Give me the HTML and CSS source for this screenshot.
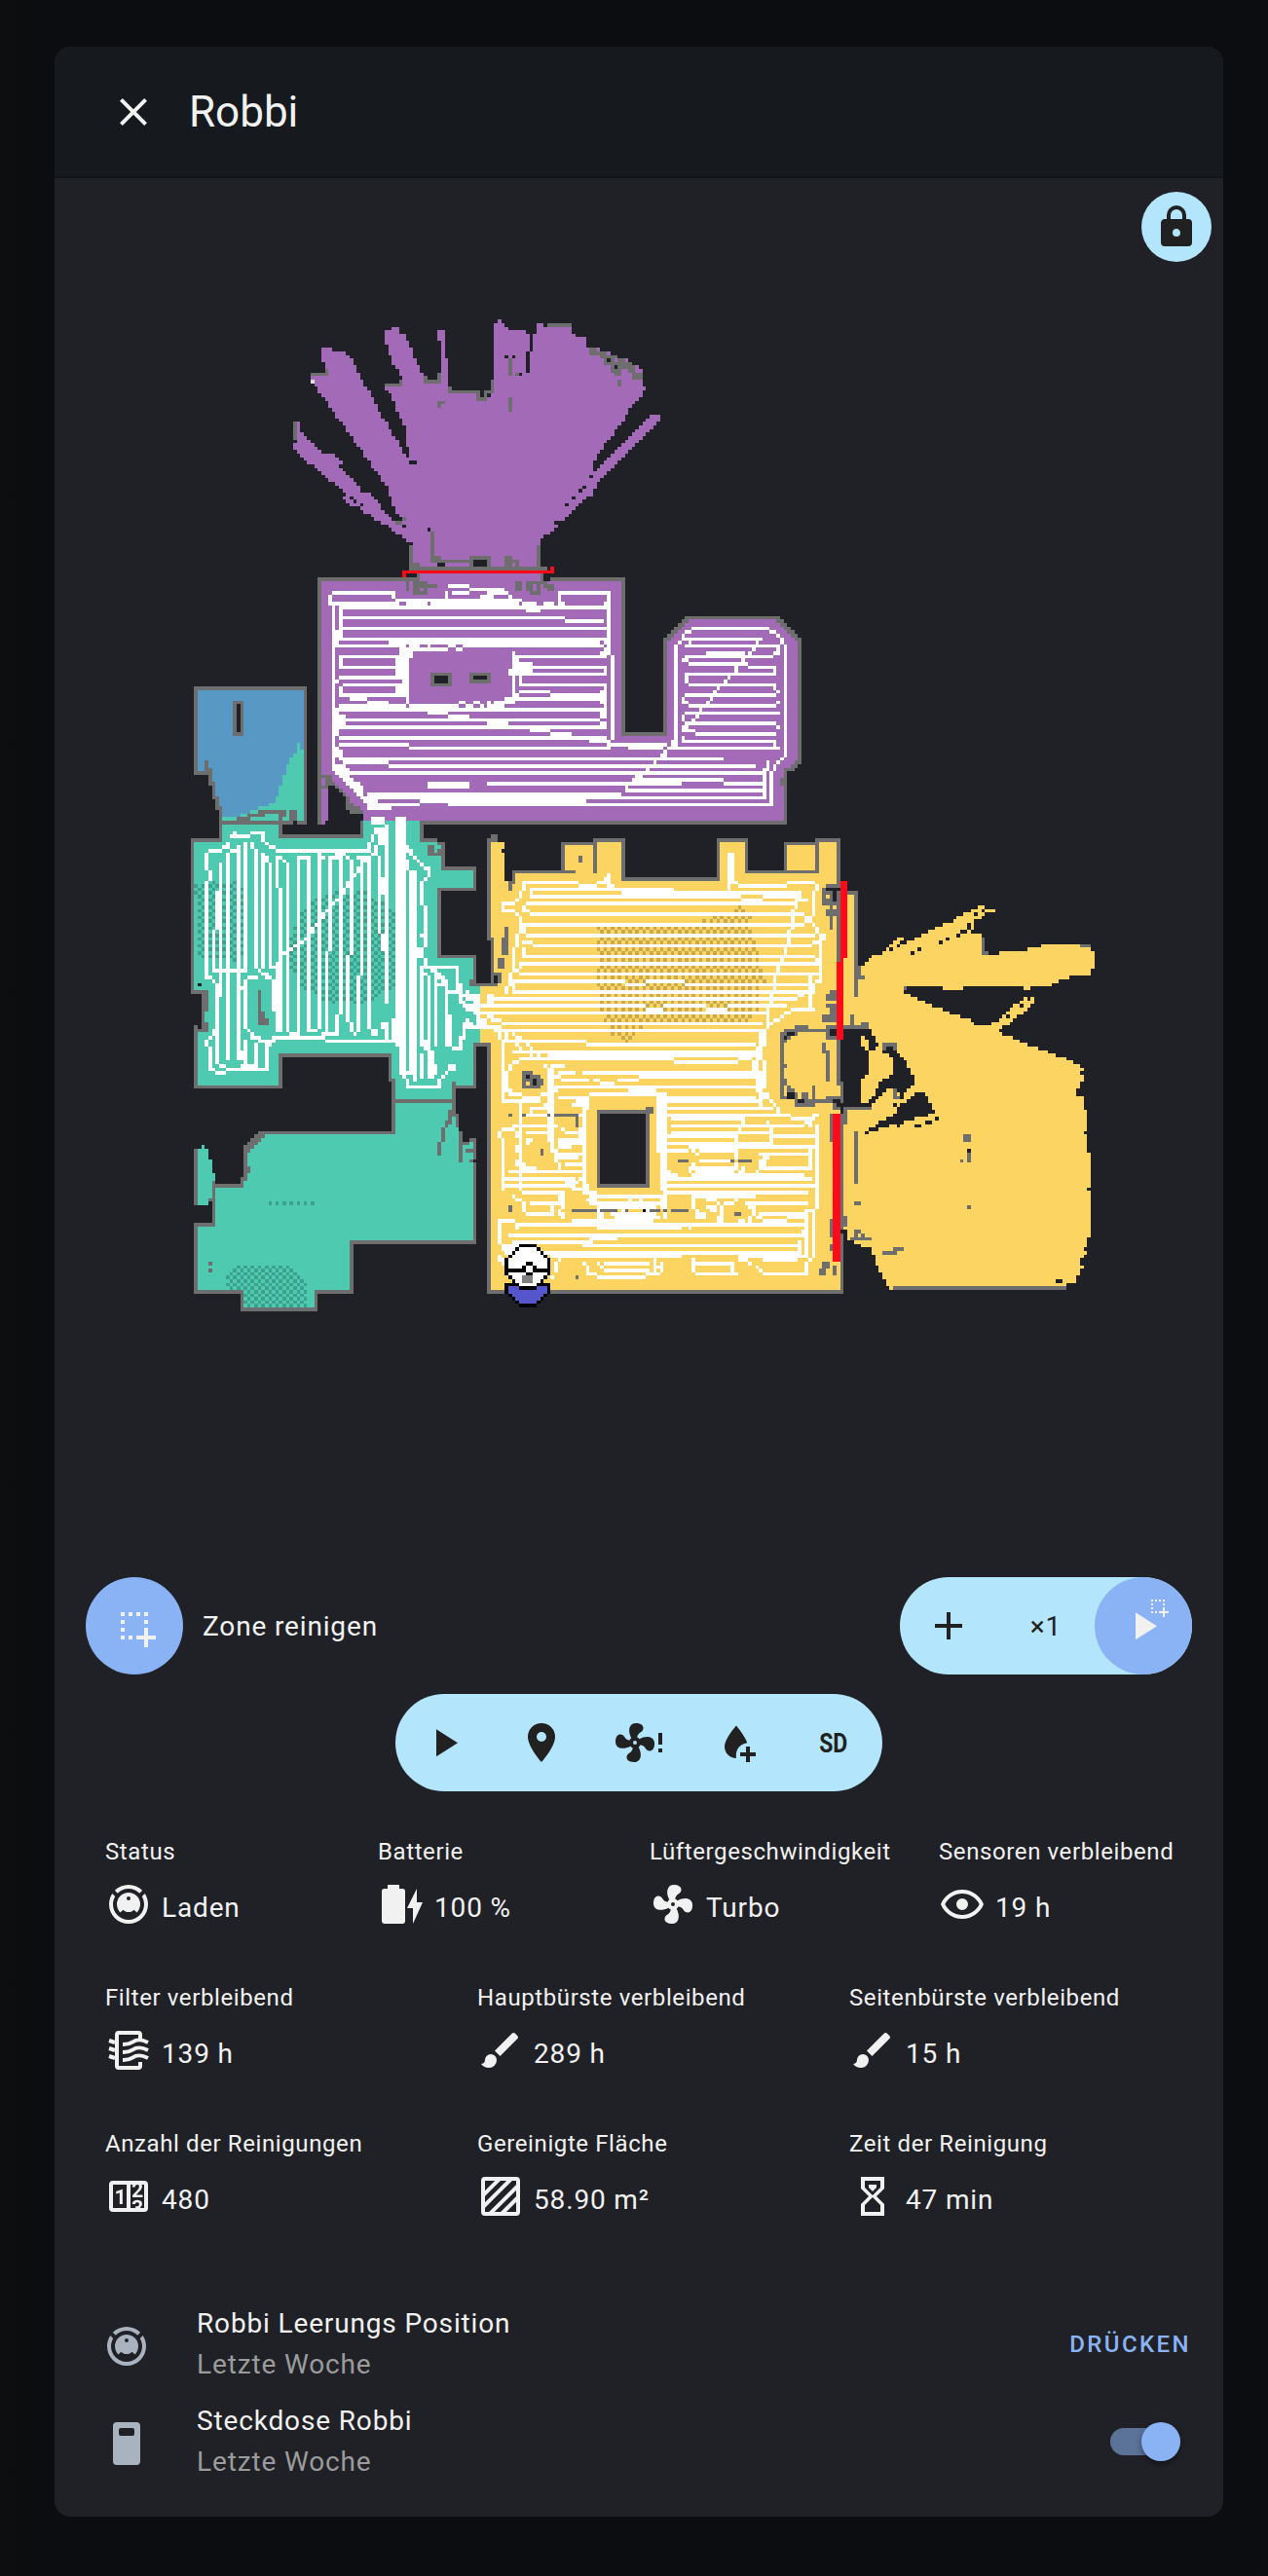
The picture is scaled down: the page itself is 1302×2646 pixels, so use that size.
FILE: index.html
```html
<!DOCTYPE html>
<html lang="de">
<head>
<meta charset="utf-8">
<title>Robbi</title>
<link rel="stylesheet" href="styles.css">
</head>
<body>
<svg class="defs" aria-hidden="true">
  <symbol id="close" viewBox="0 0 24 24"><path d="M19,6.41L17.59,5L12,10.59L6.41,5L5,6.41L10.59,12L5,17.59L6.41,19L12,13.41L17.59,19L19,17.59L13.41,12L19,6.41Z"/></symbol>
  <symbol id="lock" viewBox="0 0 24 24"><path d="M12,17A2,2 0 0,0 14,15C14,13.89 13.1,13 12,13A2,2 0 0,0 10,15A2,2 0 0,0 12,17M18,8A2,2 0 0,1 20,10V20A2,2 0 0,1 18,22H6A2,2 0 0,1 4,20V10C4,8.89 4.9,8 6,8H7V6A5,5 0 0,1 12,1A5,5 0 0,1 17,6V8H18M12,3A3,3 0 0,0 9,6V8H15V6A3,3 0 0,0 12,3Z"/></symbol>
  <symbol id="select" viewBox="0 0 24 24"><path d="M13,17H17V13H19V17H23V19H19V23H17V19H13V17M11,17V19H9V17H11M7,17V19H5V17H7M19,9V11H17V9H19M19,5V7H17V5H19M15,5V7H13V5H15M11,5V7H9V5H11M7,5V7H5V5H7M7,13V15H5V13H7M7,9V11H5V9H7Z"/></symbol>
  <symbol id="plus" viewBox="0 0 24 24"><path d="M19,13H13V19H11V13H5V11H11V5H13V11H19V13Z"/></symbol>
  <symbol id="play" viewBox="0 0 24 24"><path d="M8,5.14V19.14L19,12.14L8,5.14Z"/></symbol>
  <symbol id="marker" viewBox="0 0 24 24"><path d="M12,11.5A2.5,2.5 0 0,1 9.5,9A2.5,2.5 0 0,1 12,6.5A2.5,2.5 0 0,1 14.5,9A2.5,2.5 0 0,1 12,11.5M12,2A7,7 0 0,0 5,9C5,14.25 12,22 12,22C12,22 19,14.25 19,9A7,7 0 0,0 12,2Z"/></symbol>
  <symbol id="fan" viewBox="0 0 24 24"><path d="M12,11A1,1 0 0,0 11,12A1,1 0 0,0 12,13A1,1 0 0,0 13,12A1,1 0 0,0 12,11M12.5,2C17,2 17.11,5.57 14.75,6.75C13.76,7.24 13.32,8.29 13.13,9.22C13.61,9.42 14.03,9.73 14.35,10.13C18.05,8.13 22.03,8.92 22.03,12.5C22.03,17 18.46,17.1 17.28,14.73C16.78,13.74 15.72,13.3 14.79,13.11C14.59,13.59 14.28,14 13.88,14.34C15.87,18.03 15.08,22 11.5,22C7,22 6.91,18.42 9.27,17.24C10.25,16.75 10.69,15.71 10.89,14.79C10.4,14.59 9.97,14.27 9.65,13.87C5.96,15.85 2,15.07 2,11.5C2,7 5.56,6.89 6.74,9.26C7.24,10.25 8.29,10.68 9.22,10.87C9.41,10.39 9.73,9.97 10.14,9.65C8.15,5.96 8.94,2 12.5,2Z"/></symbol>
  <symbol id="fan-alert" viewBox="0 0 24 24"><use href="#fan" x="-2" y="0" width="24" height="24"/><path d="M22,7H24V13H22ZM22,15H24V17H22Z"/></symbol>
  <symbol id="water-plus" viewBox="0 0 24 24"><path d="M12,3.25C12,3.25 6,10 6,14C6,17.32 8.69,20 12,20C11.5,16.5 13,13 17.6,12.1C16.3,8.2 12,3.25 12,3.25ZM17,14H19V17H22V19H19V22H17V19H14V17H17Z"/></symbol>
  <symbol id="vacuum" viewBox="0 0 24 24"><path d="M12,2C14.65,2 17.19,3.06 19.07,4.93L17.65,6.35C16.15,4.85 14.12,4 12,4C9.88,4 7.84,4.84 6.35,6.35L4.93,4.93C6.81,3.06 9.35,2 12,2M3.66,6.5L5.11,7.94C4.39,9.17 4,10.57 4,12A8,8 0 0,0 12,20A8,8 0 0,0 20,12C20,10.57 19.61,9.17 18.88,7.94L20.34,6.5C21.42,8.12 22,10.04 22,12A10,10 0 0,1 12,22A10,10 0 0,1 2,12C2,10.04 2.58,8.12 3.66,6.5M12,6A6,6 0 0,1 18,12C18,13.59 17.37,15.12 16.24,16.24L14.83,14.83C14.08,15.58 13.06,16 12,16C10.94,16 9.92,15.58 9.17,14.83L7.76,16.24C6.63,15.12 6,13.59 6,12A6,6 0 0,1 12,6M12,8A1,1 0 0,0 11,9A1,1 0 0,0 12,10A1,1 0 0,0 13,9A1,1 0 0,0 12,8Z"/></symbol>
  <symbol id="battery" viewBox="0 0 24 24"><path d="M23,11H20V4L15,14H18V22M12.67,4H11V2H5V4H3.33A1.33,1.33 0 0,0 2,5.33V20.67C2,21.4 2.6,22 3.33,22H12.67A1.33,1.33 0 0,0 14,20.67V5.33A1.33,1.33 0 0,0 12.67,4Z"/></symbol>
  <symbol id="eye" viewBox="0 0 24 24"><path d="M12,9A3,3 0 0,1 15,12A3,3 0 0,1 12,15A3,3 0 0,1 9,12A3,3 0 0,1 12,9M12,4.5C17,4.5 21.27,7.61 23,12C21.27,16.39 17,19.5 12,19.5C7,19.5 2.73,16.39 1,12C2.73,7.61 7,4.5 12,4.5M3.18,12C4.83,15.36 8.24,17.5 12,17.5C15.76,17.5 19.17,15.36 20.82,12C19.17,8.64 15.76,6.5 12,6.5C8.24,6.5 4.83,8.64 3.18,12Z"/></symbol>
  <symbol id="filter" viewBox="0 0 24 24"><g fill="none" stroke="currentColor" stroke-width="2"><path d="M18,6V4A1,1 0 0,0 17,3H7A1,1 0 0,0 6,4V20A1,1 0 0,0 7,21H17A1,1 0 0,0 18,20V18"/><path d="M22,8C18,6 16,6.500 14,7.800S11,9 9,9M22,12C18,10 16,10.500 14,11.800S11,13 9,13M22,16C18,14 16,14.500 14,15.800S11,17 9,17M2,7L5,8M2,11L5,12M2,15L5,16"/></g></symbol>
  <symbol id="brush" viewBox="0 0 24 24"><path d="M20.71,4.63L19.37,3.29C19,2.9 18.35,2.9 17.96,3.29L9,12.25L11.75,15L20.71,6.04C21.1,5.65 21.1,5 20.71,4.63M7,14A3,3 0 0,0 4,17C4,18.31 2.84,19 2,19C2.92,20.22 4.5,21 6,21A4,4 0 0,0 10,17A3,3 0 0,0 7,14Z"/></symbol>
  <symbol id="counter" viewBox="0 0 24 24"><path d="M4,4H20A2,2 0 0,1 22,6V18A2,2 0 0,1 20,20H4A2,2 0 0,1 2,18V6A2,2 0 0,1 4,4M4,6V18H11V6H4M20,18V6H18.76C19,6.54 18.95,7.07 18.95,7.13C18.88,7.8 18.41,8.5 18.24,8.75L15.91,11.3L19.23,11.28L19.24,12.5L14.04,12.47L14,11.47C14,11.47 17.05,8.24 17.2,7.95C17.34,7.67 17.91,6 16.5,6C15.27,6.05 15.41,7.3 15.41,7.3L13.87,7.31C13.87,7.31 13.88,6.65 14.25,6H13V18H15.58L15.57,17.14L16.54,17.13C16.54,17.13 17.45,16.97 17.46,16.08C17.5,15.08 16.65,15.08 16.5,15.08C16.37,15.08 15.43,15.13 15.43,15.95H13.91C13.91,15.95 13.95,13.89 16.5,13.89C19.1,13.89 18.96,15.91 18.96,15.91C18.96,15.91 19,17.16 17.85,17.63L18.37,18H20M8.92,16H7.42V10.2L5.62,10.76V9.53L8.76,8.41H8.92V16Z"/></symbol>
  <symbol id="area" viewBox="0 0 24 24"><g fill="none" stroke="currentColor" stroke-width="2"><rect x="3" y="3" width="18" height="18" rx="1"/><path d="M3,11.500L11.500,3M3,17.500L17.500,3M6.500,21L21,6.500M12.500,21L21,12.500"/></g></symbol>
  <symbol id="sand" viewBox="0 0 24 24"><path d="M6,2V8L10,12L6,16V22H18V16L14,12L18,8V2H6M16,16.5V20H8V16.5L12,12.5L16,16.5M12,11.5L8,7.5V4H16V7.5L12,11.5M10,6H14V7.500L12,9.500L10,7.500Z"/></symbol>
  <symbol id="socket" viewBox="0 0 24 24"><path fill-rule="evenodd" d="M7,1H17A2,2 0 0,1 19,3V21A2,2 0 0,1 17,23H7A2,2 0 0,1 5,21V3A2,2 0 0,1 7,1ZM9,4A1,1 0 0,0 8,5V7A1,1 0 0,0 9,8H15A1,1 0 0,0 16,7V5A1,1 0 0,0 15,4Z"/></symbol>
</svg>
<main class="dialog">
  <header class="header">
    <svg class="icon"><use href="#close"/></svg>
    <h1 class="title">Robbi</h1>
  </header>
  <section class="map">
    <canvas id="map" class="map-canvas" width="1200" height="1400"></canvas>
    <div class="lock"><svg class="icon"><use href="#lock"/></svg></div>
  </section>
  <section class="zone">
    <div class="round"><svg class="icon"><use href="#select"/></svg></div>
    <span class="zone-label">Zone reinigen</span>
    <div class="repeat">
      <div class="cell"><svg class="icon"><use href="#plus"/></svg></div>
      <div class="cell">×1</div>
      <div class="round go"><svg class="icon"><use href="#play"/></svg><svg class="mini"><use href="#select"/></svg></div>
    </div>
  </section>
  <nav class="toolbar">
    <div class="cell"><svg class="icon"><use href="#play"/></svg></div>
    <div class="cell"><svg class="icon"><use href="#marker"/></svg></div>
    <div class="cell"><svg class="icon"><use href="#fan-alert"/></svg></div>
    <div class="cell"><svg class="icon"><use href="#water-plus"/></svg></div>
    <div class="cell"><span class="sd">SD</span></div>
  </nav>
  <section class="stats">
    <div class="row four">
      <div><div class="label">Status</div><div class="value"><svg class="icon"><use href="#vacuum"/></svg>Laden</div></div>
      <div><div class="label">Batterie</div><div class="value"><svg class="icon"><use href="#battery"/></svg>100 %</div></div>
      <div><div class="label">Lüftergeschwindigkeit</div><div class="value"><svg class="icon"><use href="#fan"/></svg>Turbo</div></div>
      <div><div class="label">Sensoren verbleibend</div><div class="value"><svg class="icon"><use href="#eye"/></svg>19 h</div></div>
    </div>
    <div class="row">
      <div><div class="label">Filter verbleibend</div><div class="value"><svg class="icon"><use href="#filter"/></svg>139 h</div></div>
      <div><div class="label">Hauptbürste verbleibend</div><div class="value"><svg class="icon"><use href="#brush"/></svg>289 h</div></div>
      <div><div class="label">Seitenbürste verbleibend</div><div class="value"><svg class="icon"><use href="#brush"/></svg>15 h</div></div>
    </div>
    <div class="row">
      <div><div class="label">Anzahl der Reinigungen</div><div class="value"><svg class="icon"><use href="#counter"/></svg>480</div></div>
      <div><div class="label">Gereinigte Fläche</div><div class="value"><svg class="icon"><use href="#area"/></svg>58.90 m²</div></div>
      <div><div class="label">Zeit der Reinigung</div><div class="value"><svg class="icon"><use href="#sand"/></svg>47 min</div></div>
    </div>
  </section>
  <section class="entities">
    <div class="entity">
      <svg class="icon"><use href="#vacuum"/></svg>
      <div class="names"><div>Robbi Leerungs Position</div><div class="sub">Letzte Woche</div></div>
      <span class="press">DRÜCKEN</span>
    </div>
    <div class="entity">
      <svg class="icon"><use href="#socket"/></svg>
      <div class="names"><div>Steckdose Robbi</div><div class="sub">Letzte Woche</div></div>
      <div class="switch"><div class="thumb"></div></div>
    </div>
  </section>
</main>
<script src="map.js"></script>
</body>
</html>
```
FILE: styles.css
```css
* { box-sizing: border-box; }
body {
  margin: 0;
  min-height: 2646px;
  padding: 48px 46px 61px 56px;
  background: linear-gradient(90deg, #0d0e0f 0, #0b0d11 60px, #0b0d11 1250px, #0c0e12 100%);
  font-family: Roboto, sans-serif;
  font-size: 28px;
  letter-spacing: 0.85px;
  color: #f1f1f1;
}
.defs { position: absolute; width: 0; height: 0; }
.icon { display: block; width: 48px; height: 48px; flex: none; fill: currentColor; }
.dialog {
  width: 1200px;
  height: 2537px;
  border-radius: 16px;
  overflow: hidden;
  background: #202126;
  display: flex;
  flex-direction: column;
}
.header {
  height: 135px;
  flex: none;
  padding: 2px 57px 0 57px;
  display: flex;
  align-items: center;
  gap: 33px;
  background: #161a1e;
  border-bottom: 3px solid #121519;
}
.title { margin: 0; font-size: 44px; font-weight: 400; letter-spacing: 0; line-height: 130px; }
.map { position: relative; height: 1437px; flex: none; }
.map-canvas { display: block; }
.lock {
  position: absolute;
  right: 12px;
  top: 14px;
  width: 72px;
  height: 72px;
  padding: 12px;
  border-radius: 50%;
  background: #b3e5fc;
  color: #212121;
}
.zone { display: flex; align-items: center; height: 100px; padding: 0 32px; }
.round {
  position: relative;
  width: 100px;
  height: 100px;
  border-radius: 50%;
  background: #8ab3f5;
  color: #f1f1f1;
  display: flex;
  align-items: center;
  justify-content: center;
}
.mini { position: absolute; left: 53px; top: 18px; width: 24px; height: 24px; fill: currentColor; }
.zone-label { margin-left: 20px; flex: 1; }
.repeat, .toolbar { display: flex; border-radius: 50px; background: #b3e5fc; color: #212121; }
.repeat { width: 300px; }
.cell { width: 100px; height: 100px; display: flex; align-items: center; justify-content: center; }
.toolbar { width: 500px; height: 100px; margin: 20px 0 0 350px; }
.sd { font-weight: 700; letter-spacing: 0; transform: scaleX(0.82); }
.stats { padding: 41px 52px 0; }
.row { display: grid; grid-template-columns: 382px 382px 1fr; height: 150px; }
.four { grid-template-columns: 280px 279px 297px 1fr; }
.label { height: 42px; line-height: 42px; font-size: 24px; white-space: nowrap; letter-spacing: 0.6px; }
.value { display: flex; align-items: center; gap: 10px; height: 48px; margin-top: 13px; line-height: 48px; }
.value .icon { margin-top: -8px; }
.entities { padding: 27px 36px 0 50px; }
.entity { display: flex; align-items: center; height: 100px; }
.entity > .icon { color: #a9b3bf; margin-top: 4px; }
.names { margin-left: 48px; flex: 1; line-height: 42px; }
.sub { color: #9b9b9b; }
.press { font-size: 24px; font-weight: 500; letter-spacing: 2.4px; color: #8ab3f5; margin-right: -3px; }
.switch { width: 72px; height: 28px; margin-right: 8px; border-radius: 14px; background: #5b7299; display: flex; align-items: center; justify-content: flex-end; }
.thumb { width: 40px; height: 40px; flex: none; border-radius: 50%; background: #8ab3f5; box-shadow: 0 3px 6px rgba(0, 0, 0, .4); }
```
FILE: map.js
```javascript
// Floor map drawn on a cell grid. Commands:
// F x y      origin of the following shapes (units are thirds of a pixel)
// P c pts    filled polygon       R c boxes  x1,y1,x2,y2 groups
// L c pts    one-cell polyline    K c pts    checkerboard polygon
const CELL = 3.624, OX = 195.8, OY = 328.35, COLS = 258, ROWS = 282;
const COLORS = {
  p: '#a36ab8', t: '#4ecab1', y: '#fcd462', b: '#5799c4', g: '#6e6e6e', w: '#ffffff',
  r: '#ff0a18', d: '#202126', T: '#3ea18e', Y: '#caaa4e', k: '#000000', n: '#5555cc', h: '#808080', e: '#e0e0e0'
};
const DATA = `
F 280 310
P p 63,435 63,457 225,590 270,640 366,700 420,745 432,745 440,700 400,690 366,672 330,625 303,590 280,588 205,510 214,500 214,490 193,470 160,468 84,393 84,372 72,372 72,430
L p 220,604 232,604 240,628 262,628
P p 150,141 183,141 183,152 225,152 245,180 335,350 415,480 440,510 440,750 400,670 375,640 355,575 117,240 117,220 160,220 160,190 150,185
P p 345,78 357,87 366,78 390,78 390,99 410,99 440,180 465,228 470,250 520,250 520,120 507,118 507,87 531,87 531,175 540,175 540,275 630,285 660,295 680,284 680,66 693,66 693,54 704,54 704,66 714,70 738,87 780,87 780,99 792,99 792,152 801,152 801,99 813,99 813,66 834,66 834,78 920,78 920,99 945,108 966,110 966,141 1000,141 1139,207 1139,262 1149,262 1149,273 1139,273 1139,295 1106,318 1086,360 1000,470 987,500 987,530 1080,440 1170,348 1194,348 1194,360 1000,556 985,590 900,670 867,675 878,690 825,735 825,816 432,816 432,500 420,480 410,390 385,340 365,285 345,270 345,258 398,258 390,207 366,195 357,130 345,130
R p 792,152,801,228
R g 117,219,171,228 160,207,171,228 345,252,398,262 390,240,398,262 465,228,477,250 465,240,518,250 507,219,518,250 540,262,551,284 540,273,640,284 627,284,660,305 651,273,680,284 672,240,680,284 63,372,72,426 507,306,531,315 507,306,518,327 726,174,738,228 726,294,738,338 747,219,758,228 846,66,920,78
R g 975,141,998,165 998,152,1030,165 1010,165,1041,174 1020,165,1062,198 1041,186,1075,219 1050,198,1074,228 1062,174,1085,207 1085,186,1106,207 1095,198,1116,219 1106,219,1139,240 1062,240,1074,262
R g 378,675,398,686 400,663,410,675 420,750,432,828 813,750,825,816 486,708,498,806 486,795,518,806 498,784,518,806 518,795,606,806 606,784,672,816 714,784,738,816 738,795,758,816 420,816,846,828 432,806,453,828
R d 780,152,792,219 640,273,651,294 714,165,726,174 738,165,747,174 758,219,768,228 1030,174,1041,186 1053,198,1062,207 618,795,660,816 507,806,531,816 477,697,486,708 420,490,443,500 975,535,987,545 955,567,966,577 942,577,953,588 921,600,932,610 900,622,911,632 270,622,280,632 247,610,258,620 236,600,247,610
R p 738,806,747,816 1030,152,1041,165 1053,174,1062,186 1085,174,1095,186 1116,207,1128,219 1128,207,1139,219
R e 117,240,129,252
F 180 570
P g 438,69 1386,69 1386,549 1503,549 1503,255 1569,189 1863,189 1929,255 1929,636 1905,665 1884,665 1884,831 579,831 579,797 546,797 525,775 525,745 471,700 471,780 450,831 438,831
P p 450,81 1374,81 1374,558 1515,558 1515,265 1580,201 1851,201 1917,265 1917,625 1890,657 1875,657 1875,819 579,819 579,785 546,775 537,745 483,697 450,675
R p 450,722,471,819 450,819,459,831 450,690,459,711 753,57,1125,81
R g 450,678,480,690 459,690,483,700 450,711,471,722 711,81,720,112 732,81,777,122 765,90,807,102 743,57,753,81 1863,690,1875,711
R p 753,102,765,112
R d 711,57,743,69
R w 483,114,678,122 471,122,483,156 666,122,678,135 678,135,1100,144 831,114,840,135 840,90,906,102 906,102,1014,112 990,112,1014,122 940,122,980,135 852,112,906,122
P w 483,144 1341,144 1341,309 1353,309 1353,579 1536,579 1536,570 1545,570 1557,600 1830,660 1842,665 1842,777 690,777 600,790 565,740 483,657
R p 840,102,906,112 852,122,940,135 690,144,711,156 777,144,786,156 492,156,504,230
R p 516,168,1329,189 516,201,1329,222 516,231,1329,255 504,264,657,276 492,290,690,309 516,318,678,342 504,351,678,375 504,384,699,396 516,405,678,429 504,438,540,450 591,438,711,450 492,450,591,462 657,450,711,462 492,290,504,384 492,396,504,471 492,396,516,405
R w 516,255,657,264 504,309,516,342
R p 504,483,777,492 504,483,525,492 840,483,1308,492 525,492,840,504 906,492,1308,504 525,516,960,525 1026,516,1308,525 504,537,1329,558 504,570,1275,580 720,580,1329,591 504,591,720,603 516,603,1503,624 657,636,1470,645 525,645,657,657 537,657,1449,666 537,678,1416,690 546,690,1047,699 570,699,777,711 906,699,1047,711 580,711,777,722 906,711,1386,722 580,722,1386,732 580,732,1362,744 625,753,753,765 753,765,840,777 1266,753,1830,765 492,558,504,591 492,624,516,645
R w 504,624,1503,636 591,732,1842,736 711,290,720,462
R p 720,290,1040,462 711,462,1040,465
R g 786,363,852,405 906,363,972,396
R d 798,375,840,396 918,375,960,384
R w 720,276,732,318 732,290,753,297 753,288,840,297 864,288,885,297 711,276,1040,288 700,290,711,309 678,351,700,363 690,363,700,375 700,375,711,384 678,405,690,438 720,462,1040,471 873,450,894,462 918,450,940,462 960,450,972,462 982,450,1015,462
R p 753,276,777,288 786,276,840,288 864,276,885,288 873,462,894,471 918,462,940,471 950,462,960,471 711,276,720,288
F 500 570
R g 87,81,108,112 120,81,141,112 132,112,165,122 153,90,165,122 120,81,186,90 174,90,186,102 186,90,207,112 165,57,174,81
R d 174,57,195,69 174,69,195,78
R w 0,102,54,112 0,112,33,122 54,112,66,122 66,122,78,135 78,135,108,156 120,168,165,177 219,114,381,122 219,122,228,144 369,114,381,309
R p 228,122,369,135 240,144,360,156 99,144,108,156 153,144,174,156 174,135,219,144 207,144,219,156 108,135,153,144 195,255,0,255
R w 0,190,240,201 240,201,360,210 0,222,360,231 195,255,348,264 0,255,195,264
R p 240,190,369,201 78,288,360,297 87,297,348,309 99,318,369,330 141,330,369,342 99,342,141,351 141,351,360,363 108,375,369,396 99,405,360,417 195,417,348,429 99,429,195,438 87,450,348,462 54,462,360,471 87,375,99,429 348,264,360,276 360,276,369,288
R w 78,297,87,438 66,351,78,375 99,342,141,342 108,363,369,375 99,375,108,396 99,396,360,405 99,417,195,429 54,438,348,450 54,438,78,462 87,309,369,318 99,330,141,342 141,342,360,351 369,330,381,580 132,537,195,549 195,549,261,558 315,570,369,580
R p 369,309,381,571 66,516,348,525 348,504,369,516 381,591,435,603 381,570,393,580 414,570,567,580 567,570,576,591 543,591,555,603 0,603,543,612 555,603,903,624
R w 567,570,576,591 555,591,903,603
R p 522,636,858,645 501,657,849,666 480,678,849,690 597,699,729,699 729,690,849,699 87,690,450,699 435,711,849,722 414,732,849,744 858,665,870,765
R w 0,699,87,711 87,699,597,711 597,690,729,699 729,699,849,711 849,678,858,699 849,732,858,753 858,636,870,657
R w 576,276,588,570 915,276,924,624 903,624,915,636 891,636,903,645 882,645,891,666 870,665,882,777 588,264,597,276 597,243,609,264 609,231,630,243 630,222,870,231 870,231,891,243 891,243,903,255 903,255,915,276
R w 609,255,849,264 609,276,903,288 621,264,630,276 609,309,882,318 675,297,795,309 597,318,621,330 882,297,903,309 891,288,903,309 621,333,804,342 804,342,891,351 882,351,891,375 609,363,891,375 609,375,621,396 621,396,891,405 882,405,891,417 891,417,903,429 609,429,891,438 597,438,609,462 609,450,621,462 621,462,891,471 891,450,903,462 609,483,903,492 597,492,609,516 609,516,891,525 891,525,903,537 597,525,609,549 600,537,642,549 642,549,891,558 597,558,609,579 597,570,891,579 882,579,891,591 891,591,903,603 609,525,621,537
R p 609,288,621,309 555,580,567,591
L w 832,270 820,292 790,322
R w 762,342,771,363 741,375,750,384 730,384,741,396 708,405,717,417 697,417,708,429 685,438,697,450 675,450,685,462 654,471,663,483 642,492,654,504 630,504,642,516 555,591,567,603 534,612,543,624 510,636,522,645 489,657,501,666 456,678,480,690 446,690,456,699 426,711,435,722 402,732,414,744
F 180 570
P g 57,405 405,405 405,831 135,831 135,785 123,785 123,752 111,750 111,711 102,710 102,678 57,678
P b 69,417 396,417 396,819 145,819 145,777 133,770 133,745 123,740 123,700 111,700 111,657 102,655 102,636 90,636 90,666 69,666
R g 90,636,102,678 177,450,210,558
R d 189,462,198,549
P t 372,579 384,579 384,603 396,603 396,819 145,819 150,810 190,808 220,795 255,778 285,770 310,760 320,723 330,700 345,650 355,620 372,612
R g 189,808,231,819 222,797,280,808 255,786,341,797 318,797,341,808 318,808,330,819 351,786,372,819 135,819,405,831
R d 363,819,372,831
F 180 820
P g 135,69 330,69 330,114 570,114 570,69 765,69 765,123 807,123 807,135 831,135 831,210 927,210 927,288 819,288 819,483 927,483 927,570 960,570 960,768 927,768 927,897 864,897 864,972 666,972 666,872 657,872 657,798 330,798 330,897 57,897 57,700 81,700 81,603 48,603 48,123 135,123
P t 145,81 318,81 318,123 579,123 579,69 753,69 753,135 807,135 807,147 819,147 819,222 918,222 918,276 807,276 807,495 918,495 918,582 960,582 960,756 918,756 918,885 852,885 852,972 678,972 678,862 666,862 666,786 318,786 318,885 69,885 69,723 102,723 102,591 57,591 57,135 145,135
R g 777,147,819,177 906,558,918,582 255,591,264,657 255,657,276,678 255,678,285,697 81,603,102,657 90,657,102,690
R t 798,147,819,156 798,156,807,168 90,657,102,690
R d 69,570,81,582 69,700,81,711 57,603,81,690
K T 80,255 180,255 210,265 210,495 180,504 144,490 69,495 69,310 57,300 57,276
K T 450,297 520,288 590,290 620,310 678,350 678,580 640,600 620,625 545,635 470,635 430,610 385,575 350,510 351,430 385,360 420,325
R w 102,156,144,168 144,147,165,156 156,135,168,147 168,114,231,123 177,102,189,114 231,102,276,114 264,114,276,135 276,135,285,147 285,147,309,156 309,156,591,168 591,135,603,168 603,114,612,135
R w 90,168,102,222 102,222,111,255 90,255,102,549 111,408,123,531 123,288,144,408 135,201,144,525 156,168,168,525 168,156,189,168 189,147,198,525 210,135,222,525 111,525,222,537 231,135,243,156 243,156,255,525 264,168,276,525 276,177,285,201 285,201,297,525 309,177,318,276 318,276,330,723 309,177,330,189 330,189,342,201 342,201,351,470 342,480,351,723 372,177,384,723 405,189,417,723 438,168,450,710 450,177,459,189 471,189,483,471 459,471,471,723 504,177,516,670 492,670,504,723 537,189,546,483 525,483,537,690 525,177,537,189 570,210,579,450 558,550,570,723 570,450,579,550 591,177,603,711 624,177,633,417 633,244,645,297 633,417,645,471 645,79,657,635
R w 372,177,417,189 471,177,504,189 492,168,525,177 558,177,603,189 603,168,624,177 570,189,579,201 264,744,309,756 297,733,309,744 309,733,459,744 459,744,678,756 351,723,384,733 417,711,438,723 450,723,504,733 537,690,546,723 546,723,558,733 603,711,624,733 633,690,645,711 645,690,657,744 666,678,690,756 309,711,330,723
R w 90,549,111,558 111,558,123,570 123,570,144,612 123,612,135,820 135,537,144,583 156,537,168,808 189,537,198,775 189,778,222,810 198,583,210,591 210,558,222,711 222,549,255,558 276,549,300,558 255,525,264,537 264,537,285,546 297,558,309,657 309,516,318,711 309,657,330,670 222,711,231,723 231,723,243,733 231,733,255,744 255,733,264,750 90,744,102,765 102,733,111,744 111,711,123,733 102,765,111,840 210,744,222,820 243,756,255,820 276,756,285,840 285,756,297,765 156,830,285,842 123,845,156,852 102,830,123,842 135,820,156,830 198,820,222,830 222,820,255,830
L w 585,195 575,205 560,225 550,240
R w 546,232,558,244 525,255,537,276 516,276,525,297 504,297,516,309 492,309,504,321 482,321,492,330 459,342,471,351 450,351,459,375 438,375,450,384 429,384,438,396 417,396,429,417 396,429,405,438 384,438,396,450 363,450,372,462 351,462,363,471 330,471,351,483 309,504,318,525 297,516,309,525
R w 603,60,645,79 612,90,633,180 633,90,657,140 678,60,711,765 711,147,720,168 720,156,732,177 732,177,743,190 743,190,753,201 753,201,765,210 765,210,786,222 777,222,786,244 765,244,777,255 753,255,765,330 765,330,777,460 753,417,765,430 753,460,765,495 765,495,777,516 753,516,873,525 720,222,743,840 711,190,720,222 743,465,753,490 690,765,711,840 732,700,743,840 753,525,765,765 765,537,777,550 765,744,786,780 777,550,786,744 798,540,807,765 786,525,807,540 807,540,819,560 807,570,840,583 819,550,831,570 831,558,840,750 861,516,873,570 840,590,852,603 840,670,852,744 861,570,873,591 873,570,885,591 852,591,885,603 852,765,885,775 873,733,885,765 885,711,895,740 690,840,732,850 753,790,765,840 777,780,798,840 798,820,807,850 831,740,852,760
R t 612,111,624,147 624,147,633,177 633,79,645,90
P w 885,600 900,591 918,603 960,603 960,710 895,710 885,700 900,680 910,660 890,640 873,625 873,610
R t 895,645,906,657 885,612,895,625 906,670,918,690
F 180 1090
R w 711,75,819,87 807,55,819,75 690,0,700,40 700,40,711,55 711,55,720,75 720,0,732,40 732,0,743,60 753,0,765,55 777,0,798,55 798,10,807,40 840,10,864,33 831,33,840,42 819,42,831,54
P g 666,100 864,100 864,162 873,162 873,216 885,216 885,250 906,250 906,237 927,237 927,564 546,564 546,717 438,717 438,771 198,771 198,717 57,717 57,498 111,498 111,380 198,380 198,357 210,357 210,270 264,216 666,216
P t 678,100 852,100 852,175 864,175 873,230 885,262 918,250 918,555 537,555 537,705 429,705 429,759 210,759 210,705 69,705 69,510 123,510 123,390 210,390 210,368 222,360 222,282 276,228 678,228
R g 678,120,852,129 852,64,864,160 840,150,852,195 831,183,840,207 819,207,831,250 807,250,819,294 852,160,864,175 873,216,885,315 885,250,906,262 894,270,927,282 906,304,918,315 210,324,231,348 57,270,69,444 102,618,111,630 102,642,111,651
R d 918,304,927,315
P t 69,270 81,270 81,262 90,262 90,270 102,270 102,303 111,303 111,348 123,348 123,370 111,370 111,423 102,423 102,444 69,444
R g 111,370,123,510 102,423,111,435
R T 285,435,297,444 309,435,318,444 330,435,342,444 351,435,363,444 372,435,384,444 396,435,405,444 417,435,429,444
K T 177,630 363,630 405,672 405,759 210,759 210,705 156,705 156,651
F 780 900
P y 249,57 291,57 291,276 324,276 324,264 357,243 390,230 410,207 430,190 443,190 443,200 477,195 500,180 540,160 600,135 630,115 672,98 672,90 693,90 693,98 726,98 726,110 705,110 680,130 660,135 660,170 672,175 684,190 684,240 738,240 738,232 800,230 867,220 867,210 1020,210 1020,231 1032,231 1032,285 1020,285 1020,308 966,308 935,320 880,340 834,342 834,350 813,350 813,342 627,342 627,350 564,350 564,342 444,342 444,362 480,370 500,383 540,404 600,425 650,445 672,458 714,458 738,440 770,410 800,390 813,372 846,372 846,395 760,460 740,470 740,483 780,495 830,520 880,537 945,565 998,590 998,630 975,660 975,678 998,678 998,720 1008,720 1008,850 1020,850 1020,1113 1008,1120 1008,1166 975,1190 998,1200 975,1250 945,1255 945,1275 400,1275 390,1250 366,1210 345,1145 312,1130 270,1125 270,1092 249,1092
R g 411,1265,945,1275
P d 249,470 345,470 345,490 357,495 357,515 366,520 357,537 336,537 336,510 324,500 324,492 312,492 312,515 324,525 336,560 336,610 324,615 312,640 312,690 303,697 336,697 357,665 378,630 400,620 411,600 411,570 400,555 378,540 390,525 411,525 425,545 455,575 465,600 477,615 477,640 460,655 432,690 432,670 411,657 390,657 345,700 345,711 249,711
P d 485,665 510,665 520,690 530,710 540,725 530,735 490,740 430,765 390,772 355,785 325,797 325,787 360,767 390,745 411,740 430,710 455,690
R d 411,697,422,711 540,744,551,753 510,753,531,765 477,765,498,775 422,765,432,775 465,231,477,243 486,222,498,231 551,198,564,210 573,190,585,198 606,177,618,186 618,170,640,177 639,144,651,170 651,168,660,177 660,111,672,122 684,102,693,111 422,210,432,222 400,222,411,231 432,198,453,207 800,395,813,404 758,430,770,438 825,372,834,383 912,1242,932,1254 987,603,998,612 998,787,1008,798 1008,960,1020,972 998,1146,1008,1155 639,840,651,852 249,1092,270,1140
R g 291,48,303,372 270,48,303,57 303,276,312,318 303,309,324,318 444,342,453,350 684,190,693,243 693,231,705,243 987,210,1020,222 378,516,422,525 378,516,390,537 411,516,422,537 411,657,422,690 422,678,432,690 249,711,345,720 312,450,336,470 249,460,336,470 280,430,291,458 291,787,303,950 291,1005,312,1014 627,798,651,819 639,852,651,885 618,873,627,885 639,1014,651,1026 280,1113,345,1125 291,1092,312,1113 312,1102,324,1113 378,1155,422,1166 411,1146,443,1155
R y 312,1125,324,1146 324,1134,336,1146 303,1102,312,1113
F 480 840
P g 60,63 72,63 72,54 93,54 93,75 114,75 114,195 138,195 138,162 288,162 288,75 387,75 387,63 486,63 486,183 768,183 768,63 864,63 864,162 975,162 975,75 1071,75 1071,63 1149,63 1149,812 1158,815 1158,1467 60,1467 60,697 72,600 72,378 60,378
P y 72,63 81,75 114,75 114,195 126,195 126,228 138,228 147,174 300,174 300,87 387,87 387,75 474,75 474,195 777,195 777,75 855,75 855,174 984,174 984,87 1071,87 1071,75 1137,75 1137,810 1149,850 1149,1455 72,1455 72,690 39,690 39,522 93,522 105,490 81,477 81,370 72,370
R d 105,96,114,108 81,490,93,510
R g 387,75,399,174 300,162,333,174 1071,75,1083,174 984,162,1083,174 342,117,354,141 126,195,138,228 114,336,126,423 105,370,126,423 93,435,114,468 81,477,105,498 6,510,93,522 1104,204,1149,216 1092,216,1104,270 1104,228,1125,264 1092,262,1149,270 1104,282,1149,303 1116,270,1125,348 1137,237,1149,300
R d 1104,216,1149,228 1125,228,1137,262 81,490,93,498
R y 1104,237,1116,250 1125,270,1137,282
K Y 400,336 720,336 715,310 800,303 810,282 845,270 860,285 876,315 876,340 888,370 888,410 909,440 918,490 909,530 909,575 876,630 549,630 549,645 525,670 480,695 460,672 430,670 430,630 400,590 400,550 387,490 400,440 387,400
R w 168,195,342,204 342,204,400,216 400,195,441,204 430,174,441,195 420,183,441,204 430,204,453,216 801,108,822,195 801,195,810,228 810,195,831,204 831,204,984,216 984,195,1071,204 1071,204,1083,228 1062,228,1071,303
R w 168,204,180,228 159,228,168,250 192,216,636,228 192,228,202,250 474,228,1030,237 192,237,1015,250 843,250,909,262 180,262,1020,270 105,262,147,270 105,270,114,290 105,282,147,290 147,250,159,262 147,290,159,303 168,270,180,290 180,282,192,292 192,292,1037,303 159,303,168,357 168,324,1037,336 168,336,180,357 180,357,1071,370 147,357,159,405 168,378,202,390 202,390,1062,402 138,402,147,470 168,402,180,430 168,423,1071,435 159,444,1083,456 159,456,168,466 138,468,159,477 159,477,1092,490 126,480,138,520 138,498,486,510 486,510,549,522 549,498,669,510 669,510,1050,522 138,510,147,530 114,522,126,545 138,530,1050,545 80,552,1015,564 0,575,550,585 550,585,603,597 603,575,735,585 735,585,800,597 800,575,984,585 39,597,930,608 105,630,909,640 80,651,918,663 105,684,366,697 366,697,888,705 138,717,888,726
R y 843,237,909,240
R w 1005,240,1030,262 1030,250,1050,262 1008,262,1020,282 1000,282,1008,348 984,348,996,390 975,390,984,423 963,435,975,444 951,456,963,477 942,490,951,530 930,545,942,575 918,585,930,650 909,650,918,690 888,700,909,750 1037,300,1050,312 1037,315,1062,324 1050,303,1062,315 1062,324,1071,336 1050,490,1062,585 1062,510,1071,545 1083,380,1092,510 1071,336,1083,357 1083,357,1104,378 1062,378,1083,390 1071,500,1083,510 1071,435,1083,444 1020,545,1037,552 996,585,1071,597 975,597,996,608 963,608,975,618 942,618,963,630 918,630,942,640 900,663,918,705
R w 0,545,40,555 6,555,40,565 18,565,40,575 0,585,40,597 27,597,39,640 27,618,60,640 0,640,105,651 60,545,80,565 60,565,80,575 60,608,80,618 72,618,105,628 80,651,105,663 93,663,105,684 114,663,126,684 138,663,147,673 147,673,168,684 105,697,114,750 180,690,192,705 159,705,168,717 192,705,202,717 192,726,202,738 213,726,225,738 213,738,255,750 245,726,255,738 147,697,159,705
R t 0,565,18,575 0,597,18,608 6,522,39,540 18,608,27,640
F 480 1080
R w 255,18,636,30 636,30,831,40 831,18,876,30 255,6,888,8 159,18,213,30 138,30,159,40 126,40,138,63 105,0,114,160 114,63,126,105 876,30,888,63 888,0,900,63 909,30,918,120 888,63,909,126 235,40,245,50 255,40,300,50 245,50,267,270 280,63,333,72 355,63,888,72 267,72,288,84 528,72,888,84 288,84,375,93 375,84,408,93 408,93,453,105 462,84,528,93 280,105,888,114 267,105,280,126 355,105,500,116 495,116,582,130 375,126,603,137 582,126,606,310 114,105,126,126 126,116,138,140 138,126,168,138 168,138,180,150 180,138,225,150 225,126,245,138 105,150,225,160 280,135,366,140 159,160,168,430 192,171,202,192 180,192,355,204 202,171,255,181 345,140,375,160 235,160,255,171 333,150,345,160
R w 355,171,375,181 366,138,375,171 327,160,355,171 615,137,888,138 606,126,615,432 615,150,900,160 615,171,940,181 615,192,963,204 627,204,855,208 627,225,1040,237 627,246,930,250 615,258,834,270 930,258,1071,270 615,279,930,290 680,290,1071,292 845,204,855,225 834,237,845,250 822,262,834,282 951,171,963,192 940,160,951,171 930,150,940,160 918,126,930,150 963,192,1000,204 900,126,918,150 996,204,1071,214 1062,192,1083,204 1040,214,1062,225 1050,225,1062,237 930,237,942,290 918,214,930,237 1071,225,1083,485 895,138,909,171
R w 594,126,603,432 603,310,615,420 615,300,680,302 680,292,700,300 690,300,700,315 700,312,714,324 714,302,822,312 822,300,834,335 834,292,900,302 714,333,822,345 690,345,700,366 680,357,690,378 700,357,714,366 714,357,822,366 822,345,834,366 834,366,845,378 845,357,855,378 855,378,876,387 888,366,900,400 615,366,627,387 627,378,648,387 690,378,1037,380 700,366,822,370 897,312,1060,324 897,333,918,345 918,357,1050,366 909,324,930,333 1050,292,1062,312 1050,324,1062,366 900,345,918,366 615,390,1060,399 615,411,1083,420 600,430,1050,441 690,441,885,450 735,450,768,462 768,462,780,471 690,450,700,490 700,490,714,515 714,500,735,515 735,471,768,485 747,490,768,500 780,474,790,520 768,510,790,530 790,462,822,474 822,450,834,466 855,462,1050,474 865,474,888,485 876,485,888,510 865,510,876,530 855,530,865,540 834,520,855,530 900,500,1037,508 885,510,909,520 909,520,985,530 985,510,1037,520 603,474,615,520
R w 95,246,105,265 105,237,147,246 138,225,280,237 147,246,168,265 180,250,267,258 105,265,114,430 147,290,159,310 159,310,168,345 147,333,159,357 168,345,180,366 180,270,190,290 190,265,202,280 245,265,267,282 255,282,267,310 267,300,280,345 280,345,288,378 280,320,340,326 280,290,320,300 288,240,300,250 300,246,340,258 280,262,340,270 280,280,355,290 267,310,355,312 300,345,355,350 180,357,213,366 126,366,300,378 355,160,366,432 345,237,355,290 300,366,355,368 114,387,320,399 114,411,320,420 300,399,345,408 320,387,333,430 345,387,366,400 333,420,355,430 168,432,300,441 138,441,150,450 150,450,168,465 168,462,180,495 192,462,288,474 180,495,267,505 255,474,267,505 280,441,300,462 288,462,300,485 280,485,288,510 355,408,375,445 375,432,400,450 366,450,400,465 400,441,600,451 375,465,495,474 400,462,603,470 594,441,615,485 495,451,510,462 530,451,540,462
R w 399,474,580,510 288,500,320,515 366,515,399,530 355,515,366,525 320,520,355,528 95,520,105,590 105,520,150,530 147,530,160,545 160,528,1050,540 400,510,420,555 399,515,570,528 450,505,594,515 603,540,656,550 680,540,690,552 400,541,603,543 126,560,1030,573 375,573,387,590 387,573,462,585 138,585,375,595 462,594,1020,604 355,594,462,597 105,595,160,610 114,610,320,625 320,615,1030,627 255,625,1050,637 95,625,105,645 105,640,126,660 1030,545,1040,573 1040,545,1050,640 1018,585,1030,615 1062,485,1071,640 1050,480,1062,500 1040,485,1050,545 1050,637,1062,650 1037,650,1050,692 909,681,1050,692 897,670,909,681 888,660,897,670 865,650,876,660 700,681,831,692 690,637,700,681 700,650,810,655 810,650,822,681 831,637,865,650 909,640,1015,652 594,650,603,681 582,660,594,670 570,640,582,681 420,670,560,681 411,660,423,670 399,650,411,660 423,645,560,655 366,655,375,690 355,645,366,655 375,685,400,695 399,692,423,700 423,692,462,695 462,692,495,702 495,692,550,695 550,685,594,695 280,640,288,650 267,645,280,680 255,690,267,700
R y 657,627,831,637 300,606,320,615 375,85,376,86 462,483,478,498 495,483,540,490 415,498,440,505
P y 399,138 582,138 582,432 375,432 375,181 399,160
R g 399,181,561,420 549,171,570,192
R d 408,192,549,411
R y 310,450,345,486 300,462,366,486 300,498,366,515 627,462,680,483 627,498,680,520 810,474,855,495 800,485,870,515 640,310,675,330 627,345,680,360 840,310,885,330 840,345,885,357 200,275,240,340
R g 168,63,202,116 202,72,225,84 213,84,235,105 192,105,225,116 126,192,138,204 168,192,180,204 246,192,255,204 267,192,342,204 333,192,342,237 225,300,235,324 648,333,680,345 810,333,822,345 834,333,876,345 126,474,138,498 320,486,399,498 408,486,462,498 486,486,495,498 561,486,594,498 603,486,615,498 627,486,680,498 822,498,843,507 333,693,342,702
R d 180,72,192,84 202,84,213,105
R y 180,93,192,105
R k 540,486,549,498
R k 159,594,213,606 147,606,225,615 138,615,234,627 126,627,246,640 114,640,255,690 126,681,246,700 138,700,234,714 114,714,255,735 114,735,255,746 126,746,246,757 138,757,234,768 147,768,225,780 159,780,213,789
R w 159,606,213,615 147,615,225,627 138,627,234,640 126,640,246,672 126,681,246,690 138,690,234,700 147,700,225,714 159,714,213,726
R k 180,648,202,660 168,660,213,672 126,672,246,681 180,681,202,693
R w 180,660,202,681
R h 168,693,202,714
R n 126,726,159,735 213,726,246,735 126,735,246,746 138,746,234,757 147,757,225,768 159,768,213,780
F 780 900
R g 63,483,75,690 75,471,216,483 105,460,150,471 75,483,117,492 75,492,95,504 75,504,85,516 75,579,85,591 75,625,85,645 192,516,204,545 204,537,216,633 237,495,249,640 249,633,258,690 75,680,105,690 105,690,240,697 162,645,171,690 85,645,97,666 97,657,105,668 130,666,150,690 105,668,117,700 105,697,171,711 204,678,258,690 204,460,249,470 204,470,216,504 216,492,237,504 216,350,237,362 204,362,237,384 204,395,237,406 216,406,237,430 192,430,237,450 216,732,225,819 216,1060,225,1113 216,1134,225,1155 192,1188,216,1212 183,1212,204,1233 225,1200,237,1233 249,720,270,765 249,1047,270,1080 225,700,249,720
R d 85,483,105,492 75,492,85,504 85,666,105,690 117,690,138,700 216,471,237,492 225,690,249,700 237,700,258,711 249,711,258,730 249,1092,270,1104
R r 249,15,270,255 237,264,258,504 249,255,258,264 225,732,249,1188
F 280 310
R r 400,828,867,837 400,828,410,849 855,816,867,837
`;

const grid = Array.from({ length: ROWS }, () => new Array(COLS).fill(null));
let fx = 0, fy = 0;
const gx = x => (fx + x / 3 - OX) / CELL;
const gy = y => (fy + y / 3 - OY) / CELL;
const set = (x, y, c) => { if (grid[y] && x >= 0 && x < COLS) grid[y][x] = c; };

function polygon(n, color, checker) {
  const pts = [];
  for (let i = 0; i < n.length; i += 2) pts.push([gx(n[i]), gy(n[i + 1])]);
  for (let y = 0; y < ROWS; y++) {
    const cy = y + 0.5, hits = [];
    pts.forEach(([x1, y1], i) => {
      const [x2, y2] = pts[(i + 1) % pts.length];
      if ((y1 <= cy) !== (y2 <= cy)) hits.push(x1 + (cy - y1) * (x2 - x1) / (y2 - y1));
    });
    hits.sort((a, b) => a - b);
    for (let i = 0; i + 1 < hits.length; i += 2)
      for (let x = Math.ceil(hits[i] - 0.5); x + 0.5 < hits[i + 1]; x++)
        if (!checker || (x + y) % 2) set(x, y, color);
  }
}
function boxes(n, color) {
  for (let i = 0; i + 3 < n.length; i += 4) {
    const x1 = Math.round(gx(n[i])), y1 = Math.round(gy(n[i + 1]));
    const x2 = Math.max(x1 + 1, Math.round(gx(n[i + 2]))), y2 = Math.max(y1 + 1, Math.round(gy(n[i + 3])));
    for (let y = y1; y < y2; y++) for (let x = x1; x < x2; x++) set(x, y, color);
  }
}
function line(n, color) {
  for (let i = 0; i + 3 < n.length; i += 2) {
    const x1 = gx(n[i]), y1 = gy(n[i + 1]), x2 = gx(n[i + 2]), y2 = gy(n[i + 3]);
    const steps = Math.ceil(Math.max(Math.abs(x2 - x1), Math.abs(y2 - y1))) || 1;
    for (let s = 0; s <= steps; s++)
      set(Math.floor(x1 + (x2 - x1) * s / steps), Math.floor(y1 + (y2 - y1) * s / steps), color);
  }
}
for (const row of DATA.trim().split('\n')) {
  const parts = row.trim().split(/[\s,]+/);
  if (parts[0] === 'F') { fx = +parts[1]; fy = +parts[2]; continue; }
  const color = COLORS[parts[1]], n = parts.slice(2).map(Number);
  if (parts[0] === 'R') boxes(n, color);
  else if (parts[0] === 'L') line(n, color);
  else polygon(n, color, parts[0] === 'K');
}
const ctx = document.getElementById('map').getContext('2d');
const px = x => Math.round(OX + x * CELL) - 56;
const py = y => Math.round(OY + y * CELL) - 183;
grid.forEach((cells, y) => cells.forEach((c, x) => {
  if (!c) return;
  ctx.fillStyle = c;
  ctx.fillRect(px(x), py(y), px(x + 1) - px(x), py(y + 1) - py(y));
}));
```
